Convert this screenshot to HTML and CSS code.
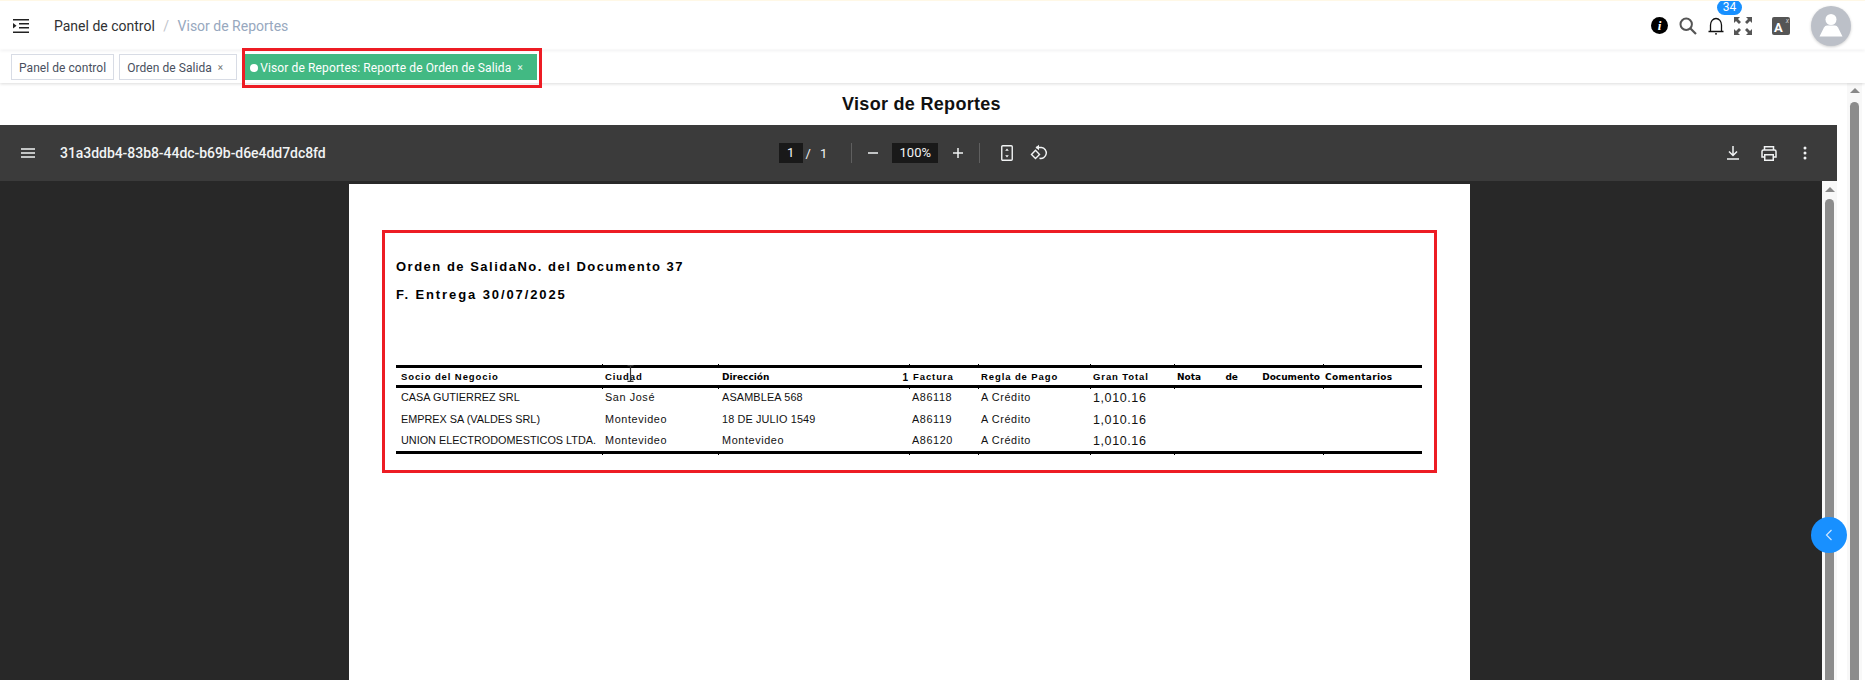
FILE: index.html
```html
<!DOCTYPE html>
<html lang="es">
<head>
    <meta charset="UTF-8">
    <title>Visor de Reportes</title>
    <link rel="stylesheet" href="styles.css">
</head>
<body>
    <div class="navbar">
        <svg class="nav-fold" width="16" height="14" viewBox="0 0 16 14">
            <path d="M0 .75h16M6 4.75h10M6 8.75h10M0 13.25h16" stroke="#222" stroke-width="1.5" fill="none"/>
            <path d="M0 4l3.5 2.8L0 9.6z" fill="#222"/>
        </svg>
        <div class="breadcrumb">
            <span class="crumb">Panel de control</span>
            <span class="crumb-sep">/</span>
            <span class="crumb-last">Visor de Reportes</span>
        </div>
        <div class="nav-icons">
            <span class="info-icon">i</span>
            <svg class="search-icon" width="18" height="18" viewBox="0 0 18 18">
                <circle cx="7.2" cy="7.2" r="5.7" fill="none" stroke="#555" stroke-width="2"/>
                <path d="M11.5 11.5l5.5 5.5" stroke="#555" stroke-width="2.2"/>
            </svg>
            <span class="bell-wrap">
                <svg width="18" height="18" viewBox="0 0 18 18">
                    <path d="M1.5 14.5h15M3.5 14.5V8a5.5 6.5 0 0 1 11 0v6.5" fill="none" stroke="#111" stroke-width="1.3"/>
                    <path d="M8 16.8h2" stroke="#111" stroke-width="1.2"/>
                </svg>
                <span class="badge">34</span>
            </span>
            <svg class="full-icon" width="18" height="18" viewBox="0 0 18 18">
                <path d="M0 0h6L4 2l3 3-2 2-3-3-2 2zM18 0v6l-2-2-3 3-2-2 3-3-2-2zM0 18v-6l2 2 3-3 2 2-3 3 2 2zM18 18h-6l2-2-3-3 2-2 3 3 2-2z" fill="#555"/>
            </svg>
            <span class="lang-icon">A<i>x</i></span>
            <span class="avatar">
                <svg width="40" height="40" viewBox="0 0 40 40">
                    <circle cx="20" cy="13.5" r="5.5" fill="#fff"/>
                    <path d="M8.5 30.5l4.5-9q1-2 3-2h8q2 0 3 2l4.5 9z" fill="#fff"/>
                </svg>
            </span>
        </div>
    </div>

    <div class="tags-bar">
        <span class="tag">Panel de control</span>
        <span class="tag">Orden de Salida <b class="tag-x">×</b></span>
        <span class="tag tag-active"><i class="tag-dot"></i>Visor de Reportes: Reporte de Orden de Salida <b class="tag-x">×</b></span>
    </div>

    <div class="main">
        <div class="content">
            <h2 class="page-title">Visor de Reportes</h2>
            <div class="viewer">
                <div class="toolbar">
                    <div class="tb-left">
                        <svg width="14" height="10" viewBox="0 0 14 10">
                            <path d="M0 1h14M0 5h14M0 9h14" stroke="#f1f3f4" stroke-width="1.5"/>
                        </svg>
                        <span class="file-name">31a3ddb4-83b8-44dc-b69b-d6e4dd7dc8fd</span>
                    </div>
                    <div class="tb-center">
                        <span class="page-num">1</span>
                        <span class="page-of">/</span>
                        <span class="page-total">1</span>
                        <span class="tb-div"></span>
                        <svg class="tb-minus" width="12" height="12" viewBox="0 0 12 12"><path d="M1 6h10" stroke="#f1f3f4" stroke-width="1.5"/></svg>
                        <span class="zoom-val">100%</span>
                        <svg class="tb-plus" width="12" height="12" viewBox="0 0 12 12"><path d="M1 6h10M6 1v10" stroke="#f1f3f4" stroke-width="1.5"/></svg>
                        <span class="tb-div tb-div2"></span>
                        <svg class="tb-fit" width="12" height="16" viewBox="0 0 12 16">
                            <rect x=".75" y=".75" width="10.5" height="14.5" rx="1" fill="none" stroke="#f1f3f4" stroke-width="1.4"/>
                            <path d="M6 3.5l1.8 2.2H4.2zM6 12.5L4.2 10.300h3.600z" fill="#f1f3f4"/>
                        </svg>
                        <svg class="tb-rotate" width="18" height="18" viewBox="0 0 18 18">
                            <path d="M6 3.500h5.500a5.500 5.500 0 1 1-2 10.800" fill="none" stroke="#f1f3f4" stroke-width="1.400"/>
                            <path d="M9 .8v5.400L5.500 3.500z" fill="#f1f3f4"/>
                            <path d="M5.500 6.300L1.500 10.500l4 4 4-4z" fill="none" stroke="#f1f3f4" stroke-width="1.400"/>
                        </svg>
                    </div>
                    <div class="tb-right">
                        <svg width="14" height="14" viewBox="0 0 14 14">
                            <path d="M7 0v9M3 5.500L7 9.500l4-4M1 13h12" fill="none" stroke="#f1f3f4" stroke-width="1.500"/>
                        </svg>
                        <svg width="16" height="15" viewBox="0 0 16 15">
                            <path d="M3.500 4V.8h9V4M3.500 11H1V5.500Q1 4 2.500 4h11Q15 4 15 5.500V11h-2.500" fill="none" stroke="#f1f3f4" stroke-width="1.500"/>
                            <rect x="3.750" y="8.750" width="8.500" height="5.500" fill="none" stroke="#f1f3f4" stroke-width="1.500"/>
                        </svg>
                        <svg class="tb-more" width="4" height="14" viewBox="0 0 4 14">
                            <circle cx="2" cy="2" r="1.500" fill="#f1f3f4"/>
                            <circle cx="2" cy="7" r="1.500" fill="#f1f3f4"/>
                            <circle cx="2" cy="12" r="1.500" fill="#f1f3f4"/>
                        </svg>
                    </div>
                </div>
                <div class="viewer-body">
                    <div class="pdf-area">
                        <div class="pdf-page">
                            <div class="report-box">
                                <div class="report-head">Orden de SalidaNo. del Documento 37</div>
                                <div class="report-head report-head2">F. Entrega 30/07/2025</div>
                                <table class="report-table">
                                    <colgroup>
                                        <col class="c1"><col class="c2"><col class="c3"><col class="c4">
                                        <col class="c5"><col class="c6"><col class="c7"><col class="c8">
                                    </colgroup>
                                    <thead>
                                        <tr>
                                            <th>Socio del Negocio</th>
                                            <th class="pad3">Ciudad
                                                <svg class="text-cursor" width="7" height="17" viewBox="0 0 7 17">
                                                    <path d="M.5.7h6M.5 16.300h6M3.500.7v15.600" fill="none" stroke="#333" stroke-width="1.200"/>
                                                </svg>
                                            </th>
                                            <th class="plain pad4">Dirección<span class="th-one">1</span></th>
                                            <th class="pad4">Factura</th>
                                            <th class="pad3">Regla de Pago</th>
                                            <th class="pad3">Gran Total</th>
                                            <th class="plain pad3 just">Nota de Documento</th>
                                            <th class="plain pad2 wide">Comentarios</th>
                                        </tr>
                                    </thead>
                                    <tbody>
                                        <tr>
                                            <td>CASA GUTIERREZ SRL</td><td class="pad3 sp">San José</td><td class="pad4 sp-low">ASAMBLEA 568</td>
                                            <td class="pad3 sp">A86118</td><td class="pad3 sp">A Crédito</td><td class="pad3 money">1,010.16</td><td></td><td></td>
                                        </tr>
                                        <tr>
                                            <td>EMPREX SA (VALDES SRL)</td><td class="pad3 sp">Montevideo</td><td class="pad4 sp-low">18 DE JULIO 1549</td>
                                            <td class="pad3 sp">A86119</td><td class="pad3 sp">A Crédito</td><td class="pad3 money">1,010.16</td><td></td><td></td>
                                        </tr>
                                        <tr>
                                            <td>UNION ELECTRODOMESTICOS LTDA.</td><td class="pad3 sp">Montevideo</td><td class="pad4 sp">Montevideo</td>
                                            <td class="pad3 sp">A86120</td><td class="pad3 sp">A Crédito</td><td class="pad3 money">1,010.16</td><td></td><td></td>
                                        </tr>
                                    </tbody>
                                </table>
                            </div>
                        </div>
                    </div>
                    <div class="scrollbar scrollbar-inner"><span class="sb-arrow"></span><span class="sb-thumb"></span></div>
                </div>
            </div>
        </div>
        <div class="scrollbar scrollbar-outer"><span class="sb-arrow"></span><span class="sb-thumb"></span></div>
    </div>

    <div class="side-btn">
        <svg width="8" height="12" viewBox="0 0 8 12"><path d="M6.500 1L1.500 6l5 5" fill="none" stroke="#cfe6ff" stroke-width="1.200"/></svg>
    </div>
</body>
</html>
```

FILE: styles.css
```css
* {
    box-sizing: border-box;
}

html, body {
    margin: 0;
    height: 100%;
    overflow: hidden;
}

body {
    display: flex;
    flex-direction: column;
    font-family: Roboto, "Liberation Sans", Arial, sans-serif;
    background-color: #fff;
    border-top: 1px solid #fff8e6;
}

/* navbar */
.navbar {
    display: flex;
    align-items: center;
    height: 49px;
    flex-shrink: 0;
    padding-left: 13px;
    position: relative;
    box-shadow: 0 1px 3px rgba(0, 21, 41, 0.06);
}

.breadcrumb {
    margin-left: 25px;
    font-size: 14px;
}

.crumb {
    color: #303133;
}

.crumb-sep {
    margin: 0 5px;
    color: #c0c4cc;
}

.crumb-last {
    color: #97a8be;
}

.nav-icons {
    display: flex;
    align-items: center;
    margin-left: auto;
    padding-right: 14px;
}

.info-icon {
    width: 17px;
    height: 17px;
    margin-right: 1px;
    border-radius: 50%;
    background-color: #000;
    color: #fff;
    font: italic bold 13px/17px "Liberation Serif", serif;
    text-align: center;
}

.search-icon {
    margin-left: 10px;
}

.bell-wrap {
    position: relative;
    display: flex;
    margin-left: 10px;
}

.badge {
    position: absolute;
    left: 10px;
    top: -17px;
    width: 25px;
    height: 15px;
    border-radius: 8px;
    background-color: #1890ff;
    color: #fff;
    font-size: 12px;
    line-height: 15px;
    text-align: center;
}

.full-icon {
    margin-left: 9px;
}

.lang-icon {
    position: relative;
    width: 18px;
    height: 18px;
    margin-left: 20px;
    border-radius: 2px;
    background-color: #555;
    color: #fff;
    font-size: 13px;
    font-weight: 700;
    line-height: 21px;
    padding-left: 2px;
}

.lang-icon i {
    position: absolute;
    right: 1px;
    top: -6px;
    font-size: 7px;
    font-weight: 400;
    color: #ccc;
}

.avatar {
    display: flex;
    width: 40px;
    height: 40px;
    margin-left: 21px;
    border-radius: 50%;
    background-color: #bcc0c8;
    box-shadow: 0 1px 3px rgba(0, 0, 0, 0.2);
}

/* tags */
.tags-bar {
    display: flex;
    align-items: center;
    gap: 5px;
    height: 33px;
    flex-shrink: 0;
    padding: 1px 0 0 11px;
    position: relative;
    box-shadow: 0 1px 3px rgba(0, 0, 0, 0.14);
}

.tag {
    display: flex;
    align-items: center;
    height: 26px;
    padding: 1px 7px 0;
    border: 1px solid #d8dce5;
    color: #495060;
    font-size: 12px;
    letter-spacing: 0.05px;
    white-space: pre;
}

.tag-x {
    font-size: 10px;
    font-weight: 400;
    color: #777;
    margin: 0 6px 0 3px;
}

.tag-active {
    position: relative;
    margin-left: 3px;
    padding-left: 4px;
    background-color: #42b983;
    border-color: #42b983;
    color: #fff;
    letter-spacing: 0.12px;
}

.tag-active .tag-x {
    color: #e8f7f0;
}

.tag-active::after {
    content: "";
    position: absolute;
    left: -4px;
    right: -6px;
    top: -7px;
    bottom: -9px;
    border: 3px solid #ed1c24;
}

.tag-dot {
    width: 8px;
    height: 8px;
    margin-right: 2px;
    border-radius: 50%;
    background-color: #fff;
}

/* main */
.main {
    display: flex;
    flex: 1;
    min-height: 0;
}

.content {
    display: flex;
    flex-direction: column;
    width: 1837px;
    flex-shrink: 0;
}

.page-title {
    height: 42px;
    margin: 0;
    padding-left: 6px;
    font: bold 18px/43px "Liberation Sans", Arial, sans-serif;
    letter-spacing: 0.3px;
    text-align: center;
    color: #111;
}

.viewer {
    display: flex;
    flex-direction: column;
    flex: 1;
    min-height: 0;
}

.toolbar {
    position: relative;
    display: flex;
    align-items: center;
    height: 56px;
    flex-shrink: 0;
    background-color: #3b3b3b;
    color: #f1f3f4;
}

.tb-left {
    display: flex;
    align-items: center;
    padding-left: 21px;
}

.file-name {
    margin-left: 25px;
    font-size: 14px;
    font-weight: 500;
    letter-spacing: -0.05px;
}

.tb-center {
    display: flex;
    align-items: center;
    margin-left: 453px;
    font-size: 13px;
}

.page-num {
    width: 24px;
    height: 20px;
    background-color: #191919;
    line-height: 20px;
    text-align: center;
}

.page-of {
    margin-left: 3px;
}

.page-total {
    margin-left: 9px;
}

.tb-div {
    width: 1px;
    height: 20px;
    margin-left: 24px;
    background-color: #5f5f5f;
}

.tb-minus {
    margin-left: 15px;
}

.zoom-val {
    width: 46px;
    height: 20px;
    margin-left: 13px;
    background-color: #191919;
    line-height: 20px;
    text-align: center;
}

.tb-plus {
    margin-left: 14px;
}

.tb-div2 {
    margin-left: 15px;
}

.tb-fit {
    margin-left: 21px;
}

.tb-rotate {
    margin-left: 17px;
}

.tb-right {
    display: flex;
    align-items: center;
    gap: 21px;
    margin-left: auto;
    padding-right: 30px;
}

.tb-more {
    margin-left: 5px;
}

.viewer-body {
    display: flex;
    flex: 1;
    min-height: 0;
}

.pdf-area {
    flex: 1;
    padding-top: 3px;
    background-color: #282828;
    overflow: hidden;
}

.pdf-page {
    width: 1121px;
    height: 900px;
    margin-left: 349px;
    padding: 46px 0 0 33px;
    background-color: #fff;
}

.report-box {
    width: 1055px;
    height: 243px;
    padding: 20px 0 0 11px;
    border: 3px solid #ed1c24;
    color: #000;
    font-family: "Liberation Sans", Arial, sans-serif;
}

.report-head {
    height: 28px;
    font-size: 13px;
    font-weight: 700;
    letter-spacing: 1.5px;
    line-height: 28px;
}

.report-head2 {
    margin-bottom: 56px;
    letter-spacing: 1.9px;
}

.report-table {
    width: 1026px;
    table-layout: fixed;
    border-collapse: collapse;
    border-top: 3px solid #000;
    border-bottom: 3px solid #000;
    font-size: 10.850px;
}

.c1 { width: 206px; }
.c2 { width: 116px; }
.c3 { width: 191px; }
.c4 { width: 69px; }
.c5 { width: 112px; }
.c6 { width: 84px; }
.c7 { width: 149px; }
.c8 { width: 99px; }

.report-table th {
    position: relative;
    height: 20px;
    padding: 0 0 0 5px;
    border-bottom: 3px solid #000;
    font-size: 9.500px;
    letter-spacing: 0.9px;
    text-align: left;
    white-space: nowrap;
}

/* small ticks where the columns meet the rules */
.report-table th + th::before,
.report-table th + th::after,
.report-table tr:last-child td + td::after {
    content: "";
    position: absolute;
    left: 0;
    width: 1px;
    height: 2px;
    background-color: #000;
}

.report-table th + th::before {
    top: -4px;
}

.report-table th + th::after,
.report-table tr:last-child td + td::after {
    bottom: -4px;
}

.report-table td {
    position: relative;
    height: 22px;
    padding: 0 0 2px 5px;
    white-space: nowrap;
    color: #111;
}

.report-table th.pad2 {
    padding-left: 2px;
}

.report-table th.pad3,
.report-table td.pad3 {
    padding-left: 3px;
}

.report-table th.pad4,
.report-table td.pad4 {
    padding-left: 4px;
}

.report-table th.plain {
    padding-top: 1px;
    font-family: "DejaVu Sans", sans-serif;
    font-size: 9px;
    letter-spacing: 0;
}

.report-table th.just {
    text-align: justify;
    text-align-last: justify;
    white-space: normal;
    padding-right: 3px;
}

.report-table th.wide {
    letter-spacing: 0.3px;
}

.th-one {
    float: right;
    margin-right: 1px;
    font-family: "Liberation Sans", Arial, sans-serif;
    font-size: 10px;
}

.sp {
    letter-spacing: 0.6px;
}

.sp-low {
    letter-spacing: 0.15px;
}

.report-table td.money {
    padding-bottom: 0;
    font-size: 12.500px;
    letter-spacing: 0.6px;
}

.text-cursor {
    position: absolute;
    left: 25px;
    top: -3px;
}

/* scrollbars */
.scrollbar {
    display: flex;
    flex-direction: column;
    align-items: center;
    flex-shrink: 0;
    background-color: #f8f8f8;
}

.scrollbar-inner {
    width: 15px;
    padding-top: 6px;
}

.scrollbar-outer {
    width: 15px;
    margin-left: 10px;
    padding-top: 5px;
}

.sb-arrow {
    width: 0;
    height: 0;
    border-left: 5px solid transparent;
    border-right: 5px solid transparent;
    border-bottom: 5px solid #888;
}

.scrollbar-outer .sb-thumb {
    margin-top: 9px;
}

.sb-thumb {
    flex: 1;
    width: 9px;
    margin-top: 7px;
    border-radius: 5px 5px 0 0;
    background-color: #8c8c8c;
}

.side-btn {
    position: absolute;
    left: 1811px;
    top: 517px;
    display: flex;
    align-items: center;
    justify-content: center;
    width: 36px;
    height: 36px;
    border-radius: 50%;
    background-color: #1890ff;
}
```
